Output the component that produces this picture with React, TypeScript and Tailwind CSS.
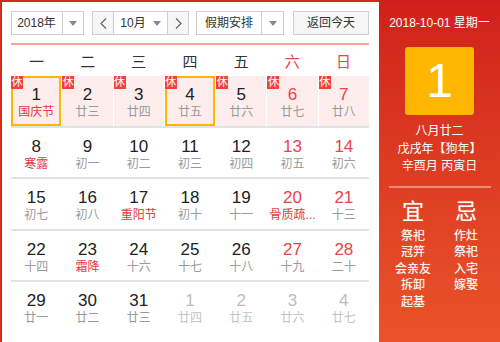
import React from "react";

type Day = { n: number; l: string; fest?: boolean; wk?: boolean; rest?: boolean; other?: boolean; sel?: boolean };

const rows: Day[][] = [
  [
    { n: 1, l: "国庆节", fest: true, rest: true, sel: true },
    { n: 2, l: "廿三", rest: true },
    { n: 3, l: "廿四", rest: true },
    { n: 4, l: "廿五", rest: true, sel: true },
    { n: 5, l: "廿六", rest: true },
    { n: 6, l: "廿七", rest: true, wk: true },
    { n: 7, l: "廿八", rest: true, wk: true },
  ],
  [
    { n: 8, l: "寒露", fest: true },
    { n: 9, l: "初一" },
    { n: 10, l: "初二" },
    { n: 11, l: "初三" },
    { n: 12, l: "初四" },
    { n: 13, l: "初五", wk: true },
    { n: 14, l: "初六", wk: true },
  ],
  [
    { n: 15, l: "初七" },
    { n: 16, l: "初八" },
    { n: 17, l: "重阳节", fest: true },
    { n: 18, l: "初十" },
    { n: 19, l: "十一" },
    { n: 20, l: "骨质疏...", fest: true, wk: true },
    { n: 21, l: "十三", wk: true },
  ],
  [
    { n: 22, l: "十四" },
    { n: 23, l: "霜降", fest: true },
    { n: 24, l: "十六" },
    { n: 25, l: "十七" },
    { n: 26, l: "十八" },
    { n: 27, l: "十九", wk: true },
    { n: 28, l: "二十", wk: true },
  ],
  [
    { n: 29, l: "廿一" },
    { n: 30, l: "廿二" },
    { n: 31, l: "廿三" },
    { n: 1, l: "廿四", other: true },
    { n: 2, l: "廿五", other: true },
    { n: 3, l: "廿六", other: true },
    { n: 4, l: "廿七", other: true },
  ],
];

const Caret = () => (
  <svg width="8" height="5" viewBox="0 0 8 5">
    <path d="M0 0 L8 0 L4 5 Z" fill="#8a8a8a" />
  </svg>
);

const Chevron = ({ dir }: { dir: "l" | "r" }) => (
  <svg width="7" height="11" viewBox="0 0 7 11">
    <path d={dir === "l" ? "M6 0.5 L1 5.5 L6 10.5" : "M1 0.5 L6 5.5 L1 10.5"} fill="none" stroke="#666" strokeWidth="1.2" />
  </svg>
);

function Cell({ d }: { d: Day }) {
  const numColor = d.other ? "text-[#bdbdbd]" : d.wk ? "text-[#e8434a]" : "text-[#222]";
  const lunColor = d.other ? "text-[#c4c4c4]" : d.fest ? "text-[#e6393d]" : "text-[#9a9a9a]";
  return (
    <div
      className={`relative flex flex-col items-center pt-[9px] ${d.rest ? "bg-[#fdeded]" : ""} ${
        d.sel ? "shadow-[inset_0_0_0_2px_#fbb700]" : ""
      }`}
    >
      {d.rest && (
        <div className="absolute left-0 top-0 w-[12px] h-[13px] bg-[#f2403c] text-white text-[11px] leading-[13px] flex items-center justify-center">
          休
        </div>
      )}
      <div className={`text-[17px] leading-[20px] ${numColor}`}>{d.n}</div>
      <div className={`text-[12px] leading-[16px] mt-[-1px] whitespace-nowrap ${lunColor}`}>{d.l}</div>
    </div>
  );
}

export default function App() {
  const week = ["一", "二", "三", "四", "五", "六", "日"];
  return (
    <div className="w-[500px] h-[342px] flex overflow-hidden bg-white font-['Liberation_Sans','Noto_Sans_CJK_SC',sans-serif]">
      <div className="w-[379px] h-full border-l-2 border-t-2 border-[#d52a20] pl-[9px] pt-[9px] bg-white">
        <div className="w-[358px]">
          <div className="flex h-[24px] text-[12px] text-[#333]">
            <div className="w-[73px] flex border border-[#cfcfcf] bg-white">
              <div className="flex-1 flex items-center justify-center pr-[1px]">2018年</div>
              <div className="w-[21px] border-l border-[#cfcfcf] flex items-center justify-center">
                <Caret />
              </div>
            </div>
            <div className="w-[97px] ml-[8px] flex border border-[#cfcfcf] bg-white">
              <div className="w-[21px] bg-[#f6f6f6] border-r border-[#cfcfcf] flex items-center justify-center">
                <Chevron dir="l" />
              </div>
              <div className="flex-1 flex items-center justify-center gap-[7px]">
                <span>10月</span>
                <Caret />
              </div>
              <div className="w-[21px] bg-[#f6f6f6] border-l border-[#cfcfcf] flex items-center justify-center">
                <Chevron dir="r" />
              </div>
            </div>
            <div className="w-[88px] ml-[7px] flex border border-[#cfcfcf] bg-white">
              <div className="flex-1 flex items-center justify-center">假期安排</div>
              <div className="w-[22px] border-l border-[#cfcfcf] flex items-center justify-center">
                <Caret />
              </div>
            </div>
            <div className="w-[76px] ml-[9px] border border-[#cfcfcf] bg-[#f6f6f6] flex items-center justify-center">
              返回今天
            </div>
          </div>
          <div className="mt-[8px] h-[2px] bg-[#f6a49e]" />
          <div className="grid grid-cols-7 h-[31px] pt-[7px]">
            {week.map((w, i) => (
              <div key={w} className={`text-center text-[15px] leading-[20px] ${i >= 5 ? "text-[#e8434a]" : "text-[#333]"}`}>
                {w}
              </div>
            ))}
          </div>
          {rows.map((r, ri) => (
            <div key={ri} className={`grid grid-cols-7 gap-x-px h-[51.5px] ${ri < 4 ? "border-b-2 border-[#e3e3e3]" : ""}`}>
              {r.map((d, di) => (
                <Cell key={di} d={d} />
              ))}
            </div>
          ))}
        </div>
      </div>
      <div className="w-[121px] h-full bg-gradient-to-b from-[#d01f1b] to-[#ea5329] flex flex-col items-center text-white">
        <div className="mt-[15px] text-[12px] leading-[16px] whitespace-nowrap">2018-10-01 星期一</div>
        <div className="mt-[16px] w-[69px] h-[68px] rounded-[3px] bg-[#ffb600] flex items-center justify-center text-[48px] leading-none">
          1
        </div>
        <div className="mt-[8px] text-[12px] leading-[17.5px] text-center">
          <div>八月廿二</div>
          <div className="whitespace-nowrap">戊戌年【狗年】</div>
          <div className="whitespace-nowrap">辛酉月 丙寅日</div>
        </div>
        <div className="mt-[10px] w-[102px] h-[2px] bg-[#f08a80]" />
        <div className="mt-[11px] flex gap-[3px] [text-shadow:0_0_1px_rgba(255,220,210,0.5)]">
          <div className="w-[50px] flex flex-col items-center">
            <div className="text-[22px] leading-[26px]">宜</div>
            <div className="mt-[3px] text-[12px] leading-[16.5px] text-center">
              <div>祭祀</div>
              <div>冠笄</div>
              <div className="whitespace-nowrap">会亲友</div>
              <div>拆卸</div>
              <div>起基</div>
            </div>
          </div>
          <div className="w-[50px] flex flex-col items-center">
            <div className="text-[22px] leading-[26px]">忌</div>
            <div className="mt-[3px] text-[12px] leading-[16.5px] text-center">
              <div>作灶</div>
              <div>祭祀</div>
              <div>入宅</div>
              <div>嫁娶</div>
            </div>
          </div>
        </div>
      </div>
    </div>
  );
}
